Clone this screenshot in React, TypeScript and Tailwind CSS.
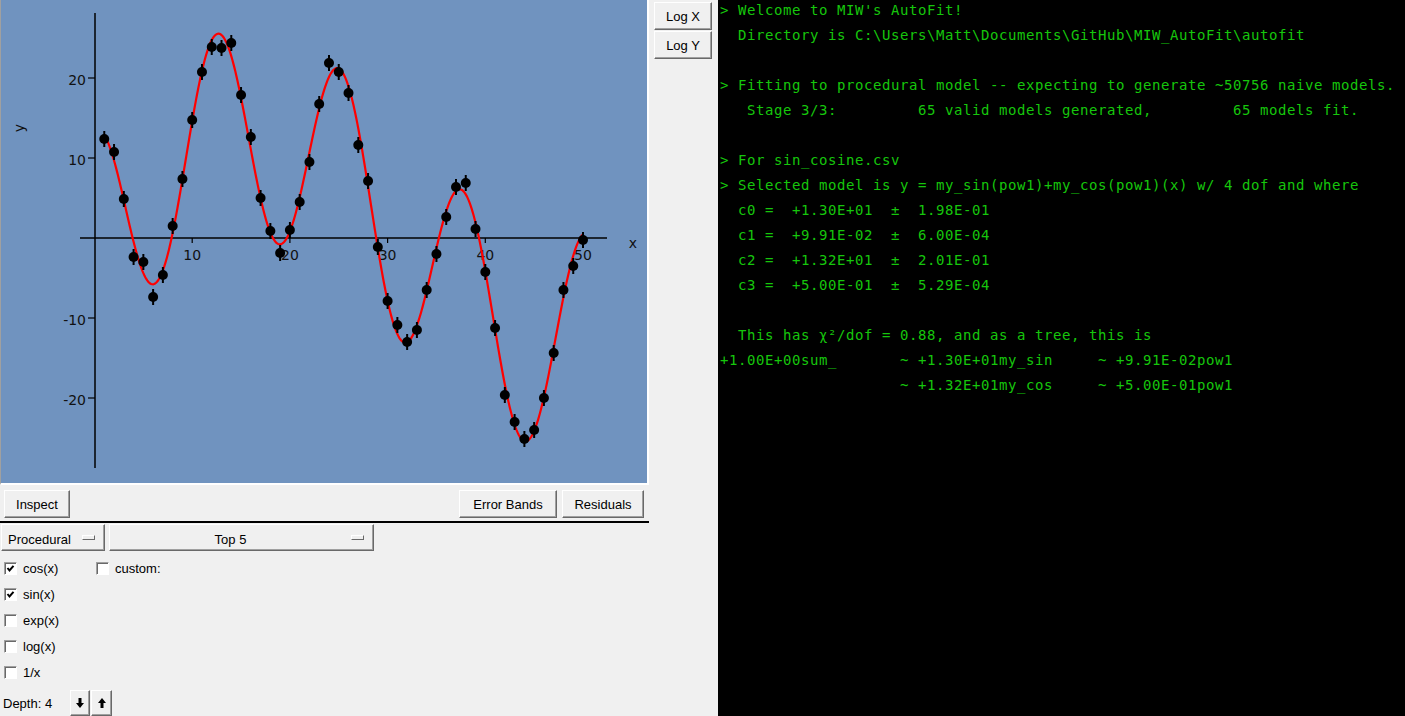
import React from 'react';

// plot space -> page pixels
const PX = (x: number) => 94.5 + 9.77 * x;
const PY = (y: number) => 238 - 8 * y;

// measured point heights (page px) for x = 1..50
const points = [
  139, 152, 199, 257, 262, 297, 275, 226, 179, 120, 72, 47, 48, 43, 95, 137, 198, 231, 253, 230,
  202, 162, 104, 63, 72, 93, 145, 181, 247, 301, 325, 342, 330, 290, 254, 217, 187, 183, 229, 272,
  328, 395, 422, 439, 430, 398, 353, 290, 266, 240,
];

function curvePath() {
  let d = '';
  for (let i = 0; i <= 490; i++) {
    const x = 1 + i * 0.1;
    const y = 13.0 * Math.sin(0.0991 * x) + 13.2 * Math.cos(0.5 * x);
    d += (i === 0 ? 'M' : 'L') + PX(x).toFixed(2) + ' ' + PY(y).toFixed(2);
  }
  return d;
}

const raised =
  'border border-white border-r-[#696969] border-b-[#696969] shadow-[inset_-1px_-1px_0_#a0a0a0] bg-[#f0f0f0]';

function Plot() {
  const yTicks = [20, 10, -10, -20];
  const xTicks = [10, 20, 30, 40, 50];
  return (
    <svg width={646} height={483} viewBox="1 0 646 483" className="block">
      <g fontFamily="DejaVu Sans, sans-serif" fontSize={14} fill="#111">
        <line x1={95} y1={13} x2={95} y2={468} stroke="#000" strokeWidth={1.5} />
        <line x1={80} y1={238} x2={607} y2={238} stroke="#000" strokeWidth={1.5} />
        {yTicks.map((t) => (
          <g key={t}>
            <line x1={88} y1={PY(t)} x2={95} y2={PY(t)} stroke="#000" strokeWidth={1.2} />
            <text x={86} y={PY(t) + 7} textAnchor="end">
              {t}
            </text>
          </g>
        ))}
        {xTicks.map((t) => (
          <g key={t}>
            <line x1={PX(t)} y1={238} x2={PX(t)} y2={243} stroke="#000" strokeWidth={1.2} />
            <text x={PX(t)} y={260} textAnchor="middle">
              {t}
            </text>
          </g>
        ))}
        <text x={633} y={248} textAnchor="middle">
          x
        </text>
        <text x={21} y={131} textAnchor="middle" transform="rotate(-90 21 128)">
          y
        </text>
      </g>
      <path d={curvePath()} fill="none" stroke="#ff0000" strokeWidth={2.2} />
      {points.map((py, i) => {
        const px = PX(i + 1);
        return (
          <g key={i}>
            <line x1={px} y1={py - 8} x2={px} y2={py + 8} stroke="#000" strokeWidth={2} />
            <circle cx={px} cy={py} r={5} fill="#000" />
          </g>
        );
      })}
    </svg>
  );
}

function Btn({ children, className = '' }: { children: React.ReactNode; className?: string }) {
  return (
    <div className={`flex h-[28px] items-center justify-center pt-[1px] ${raised} ${className}`}>{children}</div>
  );
}

function Drop({ label, center, className = '' }: { label: string; center?: boolean; className?: string }) {
  return (
    <div className={`flex h-[27px] items-center ${raised} ${className}`}>
      <span className={center ? 'flex-1 pt-[4px] text-center' : 'flex-1 pl-[6px] pt-[4px]'}>{label}</span>
      <span className="mr-[9px] h-[5px] w-[13px] border border-white border-r-[#696969] border-b-[#696969]" />
    </div>
  );
}

function Check({ label, checked, className = '' }: { label: string; checked?: boolean; className?: string }) {
  return (
    <div className={`flex items-center pl-[4px] ${className}`}>
      <span className="flex h-[13px] w-[13px] items-center justify-center border border-[#a0a0a0] border-r-white border-b-white bg-white shadow-[inset_1px_1px_0_#696969]">
        {checked && (
          <svg width={9} height={9} viewBox="0 0 9 9">
            <polyline points="1.5,4 3.5,6.5 7.5,1.8" fill="none" stroke="#000" strokeWidth={2} />
          </svg>
        )}
      </span>
      <span className="ml-[6px] pt-[2px]">{label}</span>
    </div>
  );
}

const termLines = [
  "> Welcome to MIW's AutoFit!",
  '  Directory is C:\\Users\\Matt\\Documents\\GitHub\\MIW_AutoFit\\autofit',
  '',
  '> Fitting to procedural model -- expecting to generate ~50756 naive models.',
  '   Stage 3/3:         65 valid models generated,         65 models fit.',
  '',
  '> For sin_cosine.csv',
  '> Selected model is y = my_sin(pow1)+my_cos(pow1)(x) w/ 4 dof and where',
  '  c0 =  +1.30E+01  ±  1.98E-01',
  '  c1 =  +9.91E-02  ±  6.00E-04',
  '  c2 =  +1.32E+01  ±  2.01E-01',
  '  c3 =  +5.00E-01  ±  5.29E-04',
  '',
  '  This has χ²/dof = 0.88, and as a tree, this is',
  '+1.00E+00sum_       ~ +1.30E+01my_sin     ~ +9.91E-02pow1',
  '                    ~ +1.32E+01my_cos     ~ +5.00E-01pow1',
];

export default function App() {
  return (
    <div className="flex h-[716px] w-[1405px] overflow-hidden bg-[#f0f0f0] font-['Liberation_Sans',Arial,sans-serif] text-[13px] text-black">
      {/* left: plot + controls */}
      <div className="flex w-[650px] shrink-0 flex-col">
        <div className="h-[485px] w-[649px] border-b-2 border-l border-r-2 border-b-white border-l-[#a0a0a0] border-r-white bg-[#7093bf]">
          <Plot />
        </div>
        <div className="flex h-[38px] items-start pl-[4px] pr-[6px] pt-[5px]">
          <Btn className="w-[66px]">Inspect</Btn>
          <div className="flex-1" />
          <Btn className="w-[98px]">Error Bands</Btn>
          <Btn className="ml-[5px] w-[82px]">Residuals</Btn>
        </div>
        <div className="h-[2px] w-[649px] bg-black" />
        <div className="mt-[1px] flex gap-[4px] pl-[1px]">
          <Drop label="Procedural" className="w-[104px]" />
          <Drop label="Top 5" center className="w-[265px]" />
        </div>
        <div className="mt-[4px] flex flex-col">
          <div className="flex h-[26px] items-center">
            <Check label="cos(x)" checked className="w-[92px]" />
            <Check label="custom:" />
          </div>
          <div className="flex h-[26px] items-center">
            <Check label="sin(x)" checked />
          </div>
          <div className="flex h-[26px] items-center">
            <Check label="exp(x)" />
          </div>
          <div className="flex h-[26px] items-center">
            <Check label="log(x)" />
          </div>
          <div className="flex h-[26px] items-center">
            <Check label="1/x" />
          </div>
        </div>
        <div className="mt-[5px] flex h-[26px] items-center">
          <span className="w-[70px] pl-[3px] pt-[2px]">Depth: 4</span>
          <div className={`flex h-[26px] w-[20px] items-center justify-center ${raised}`}>
            <svg width={8} height={10} viewBox="0 0 8 10">
              <path d="M2.5 0h3v5h2.5L4 10 0 5h2.5z" fill="#000" />
            </svg>
          </div>
          <div className={`ml-[1px] flex h-[26px] w-[21px] items-center justify-center ${raised}`}>
            <svg width={8} height={10} viewBox="0 0 8 10">
              <path d="M2.5 10h3V5h2.5L4 0 0 5h2.5z" fill="#000" />
            </svg>
          </div>
        </div>
      </div>

      {/* middle: axis scale buttons */}
      <div className="flex w-[68px] shrink-0 flex-col gap-[1px] pl-[4px] pt-[2px]">
        <Btn className="h-[27px] w-[58px]">Log X</Btn>
        <Btn className="h-[27px] w-[58px]">Log Y</Btn>
      </div>

      {/* right: console */}
      <div className="flex-1 bg-black pl-[2px] font-['DejaVu_Sans_Mono',monospace] text-[14px] leading-[25px] tracking-[0.57px] text-[#16c60c]">
        <div className="-mt-[2px]">
          {termLines.map((l, i) => (
            <div key={i} className="h-[25px] whitespace-pre">
              {l}
            </div>
          ))}
        </div>
      </div>
    </div>
  );
}
